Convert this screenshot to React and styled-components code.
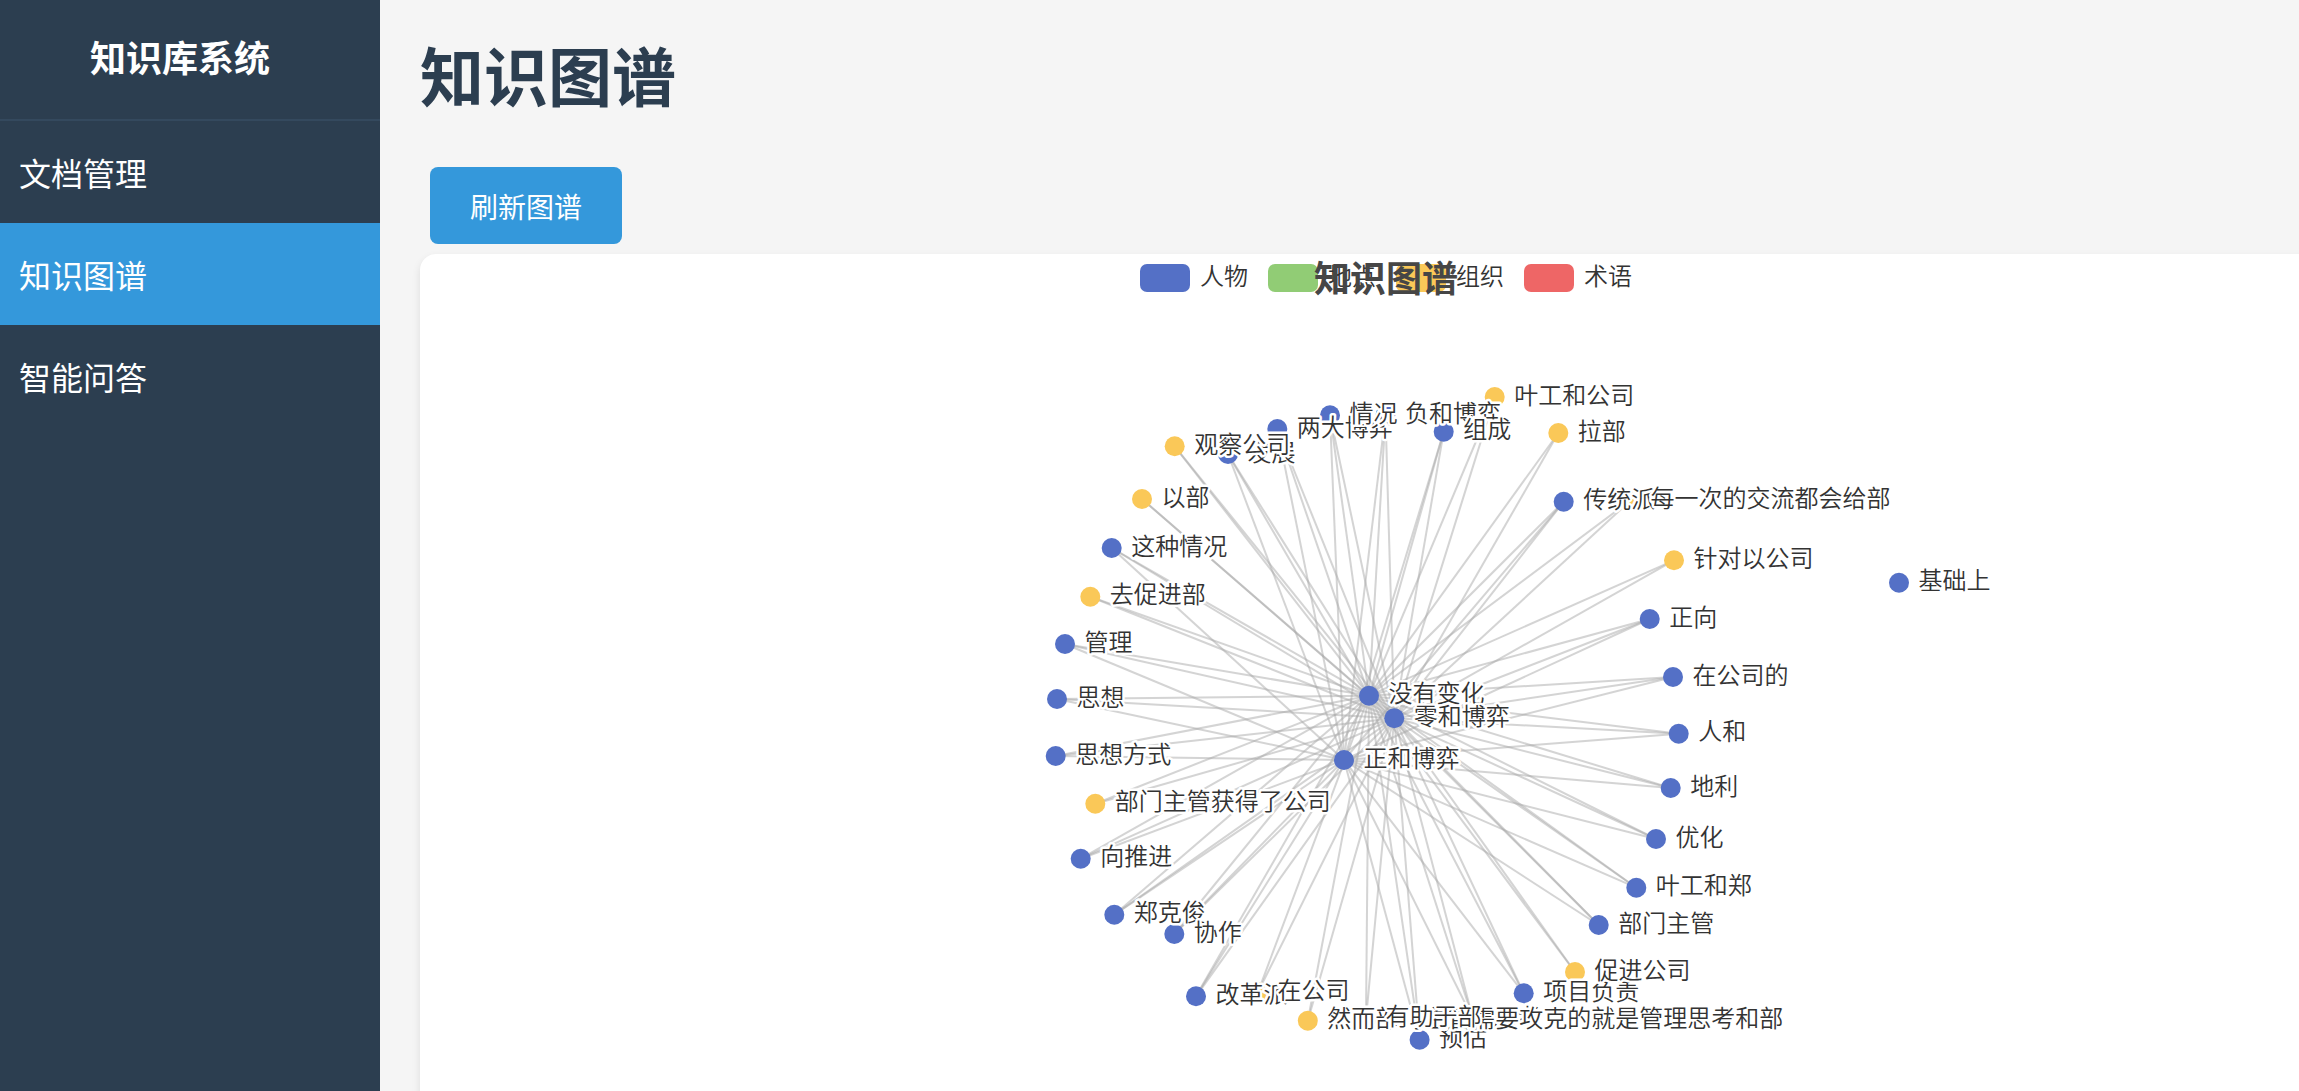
import React from 'react';
import styled, { createGlobalStyle } from 'styled-components';

const PERSON = '#5470c6';
const PLACE = '#91cc75';
const ORG = '#fac858';
const TERM = '#ee6666';

const menus = ['文档管理', '知识图谱', '智能问答'];

const legends = [
    { name: '人物', color: PERSON },
    { name: '地点', color: PLACE },
    { name: '组织', color: ORG },
    { name: '术语', color: TERM },
];

// coordinates are relative to the chart canvas
const hubs = {
    none: [949, 441.7],
    zero: [974.3, 464.3],
    plus: [924, 506],
};

// [label, x, y, type], later labels are painted over earlier ones
const nodes = [
    ['没有变化', 949, 441.7, 'hub'],
    ['零和博弈', 974.3, 464.3, 'hub'],
    ['正和博弈', 924, 506, 'hub'],
    ['基础上', 1479, 328.7, 'alone'],
    ['负和博弈', 965.5, 161, 'person'],
    ['组成', 1023.7, 177.7, 'person'],
    ['叶工和公司', 1074.7, 143, 'org'],
    ['拉部', 1138.3, 179, 'org'],
    ['传统派', 1143.7, 247.7, 'person'],
    ['每一次的交流都会给部', 1211, 246, 'org'],
    ['针对以公司', 1254, 306.3, 'org'],
    ['正向', 1229.7, 365, 'person'],
    ['在公司的', 1253, 423, 'person'],
    ['人和', 1258.7, 479.7, 'person'],
    ['地利', 1250.7, 534, 'person'],
    ['优化', 1236, 585, 'person'],
    ['叶工和郑', 1216.3, 633.7, 'person'],
    ['部门主管', 1178.7, 671, 'person'],
    ['项目负责', 1103.7, 739.3, 'person'],
    ['促进公司', 1155, 718, 'org'],
    ['预估', 999.6, 785.7, 'person'],
    ['思考', 1053, 765, 'person'],
    ['然而部门主管需要攻克的就是管理思考和部', 887.8, 766.7, 'org'],
    ['有助于部', 946, 764.7, 'org'],
    ['改革派', 776, 742.3, 'person'],
    ['在公司', 838, 738, 'org'],
    ['郑克俊', 694.3, 660.7, 'person'],
    ['协作', 754.3, 680, 'person'],
    ['向推进', 660.7, 604.7, 'person'],
    ['部门主管获得了公司', 675.3, 549.7, 'org'],
    ['思想方式', 635.7, 502, 'person'],
    ['思想', 637, 445, 'person'],
    ['管理', 645, 390, 'person'],
    ['去促进部', 670.3, 342.7, 'org'],
    ['这种情况', 691.7, 294, 'person'],
    ['以部', 722, 245, 'org'],
    ['发展', 808, 200, 'person'],
    ['观察公司', 754.7, 192.3, 'org'],
    ['两大博弈', 857.3, 175, 'person'],
    ['情况', 910, 161.3, 'person'],
];

const linksOf = (type) => {
    if (type === 'person') return ['none', 'zero', 'plus'];
    if (type === 'org') return ['none', 'zero'];
    return [];
};

const Graph = () => {
    return (
        <Canvas viewBox="0 0 1932 1200">
            {nodes.map(([name, x, y, type]) =>
                linksOf(type).map((hub) => (
                    <Edge key={name + hub} x1={x} y1={y} x2={hubs[hub][0]} y2={hubs[hub][1]} />
                ))
            )}
            {nodes.map(([name, x, y, type]) => (
                <circle key={name} cx={x} cy={y} r="10" fill={type === 'org' ? ORG : PERSON} />
            ))}
            {nodes.map(([name, x, y]) => (
                <Label key={name} x={x + 19.5} y={y + 6.7}>{name}</Label>
            ))}
        </Canvas>
    );
};

const App = () => {
    return (
        <Page>
            <GlobalStyle />
            <Sidebar>
                <Brand>知识库系统</Brand>
                {menus.map((menu) => (
                    <MenuItem key={menu} $active={menu === '知识图谱'}>{menu}</MenuItem>
                ))}
            </Sidebar>
            <Content>
                <Title>知识图谱</Title>
                <Refresh>刷新图谱</Refresh>
                <Chart>
                    <Legend>
                        {legends.map((item) => (
                            <LegendItem key={item.name}>
                                <Swatch $color={item.color} />
                                <LegendText>{item.name}</LegendText>
                            </LegendItem>
                        ))}
                    </Legend>
                    <ChartTitle>知识图谱</ChartTitle>
                    <Graph />
                </Chart>
            </Content>
        </Page>
    );
};

const GlobalStyle = createGlobalStyle`
* {
    box-sizing: border-box;
}
body {
    margin: 0;
    overflow: hidden;
    background: #f5f5f5;
    font-family: "Noto Sans CJK SC", sans-serif;
}
`;

const Page = styled.div`
display: flex;
height: 100vh;
overflow: hidden;
`;

const Sidebar = styled.div`
flex: none;
width: 380px;
background: #2c3e50;
color: #fff;
`;

const Brand = styled.h2`
margin: 0;
height: 121px;
padding: 0 20px 6px 0;
border-bottom: 2px solid #34495e;
font-size: 36px;
line-height: 112px;
text-align: center;
`;

const MenuItem = styled.div`
height: 102px;
padding-left: 19px;
font-size: 32px;
line-height: 102px;
background: ${(props) => (props.$active ? '#3498db' : 'transparent')};
`;

const Content = styled.div`
flex: none;
width: 1972px;
padding: 0 0 0 40px;
`;

const Title = styled.h1`
margin: 0;
height: 167px;
font-size: 64px;
line-height: 147px;
color: #2c3e50;
`;

const Refresh = styled.button`
display: block;
width: 192px;
height: 77px;
margin: 0 10px 10px;
padding: 0;
border: none;
border-radius: 8px;
background: #3498db;
color: #fff;
font-family: inherit;
font-size: 28px;
line-height: 79px;
`;

const Chart = styled.div`
position: relative;
width: 1932px;
height: 1200px;
background: #fff;
border-radius: 16px;
box-shadow: 0 4px 8px rgba(0, 0, 0, 0.1);
`;

const Legend = styled.div`
display: flex;
justify-content: center;
gap: 20px;
padding-top: 10px;
`;

const LegendItem = styled.div`
display: flex;
gap: 10px;
height: 28px;
`;

const Swatch = styled.span`
width: 50px;
height: 28px;
border-radius: 7px;
background: ${(props) => props.$color};
`;

const LegendText = styled.span`
font-size: 24px;
line-height: 22px;
font-weight: 350;
color: #333;
`;

/* title is drawn over the legend */
const ChartTitle = styled.div`
position: absolute;
top: 9px;
left: 0;
width: 100%;
text-align: center;
font-size: 36px;
line-height: 27px;
font-weight: bold;
color: #464646;
`;

const Canvas = styled.svg`
position: absolute;
top: 0;
left: 0;
width: 1932px;
height: 1200px;
`;

const Edge = styled.line`
stroke: #aaa;
stroke-width: 2;
opacity: 0.5;
`;

const Label = styled.text`
font-size: 24px;
font-weight: 350;
fill: #333;
stroke: #fff;
stroke-width: 5;
stroke-linejoin: round;
paint-order: stroke;
`;

export default App;
